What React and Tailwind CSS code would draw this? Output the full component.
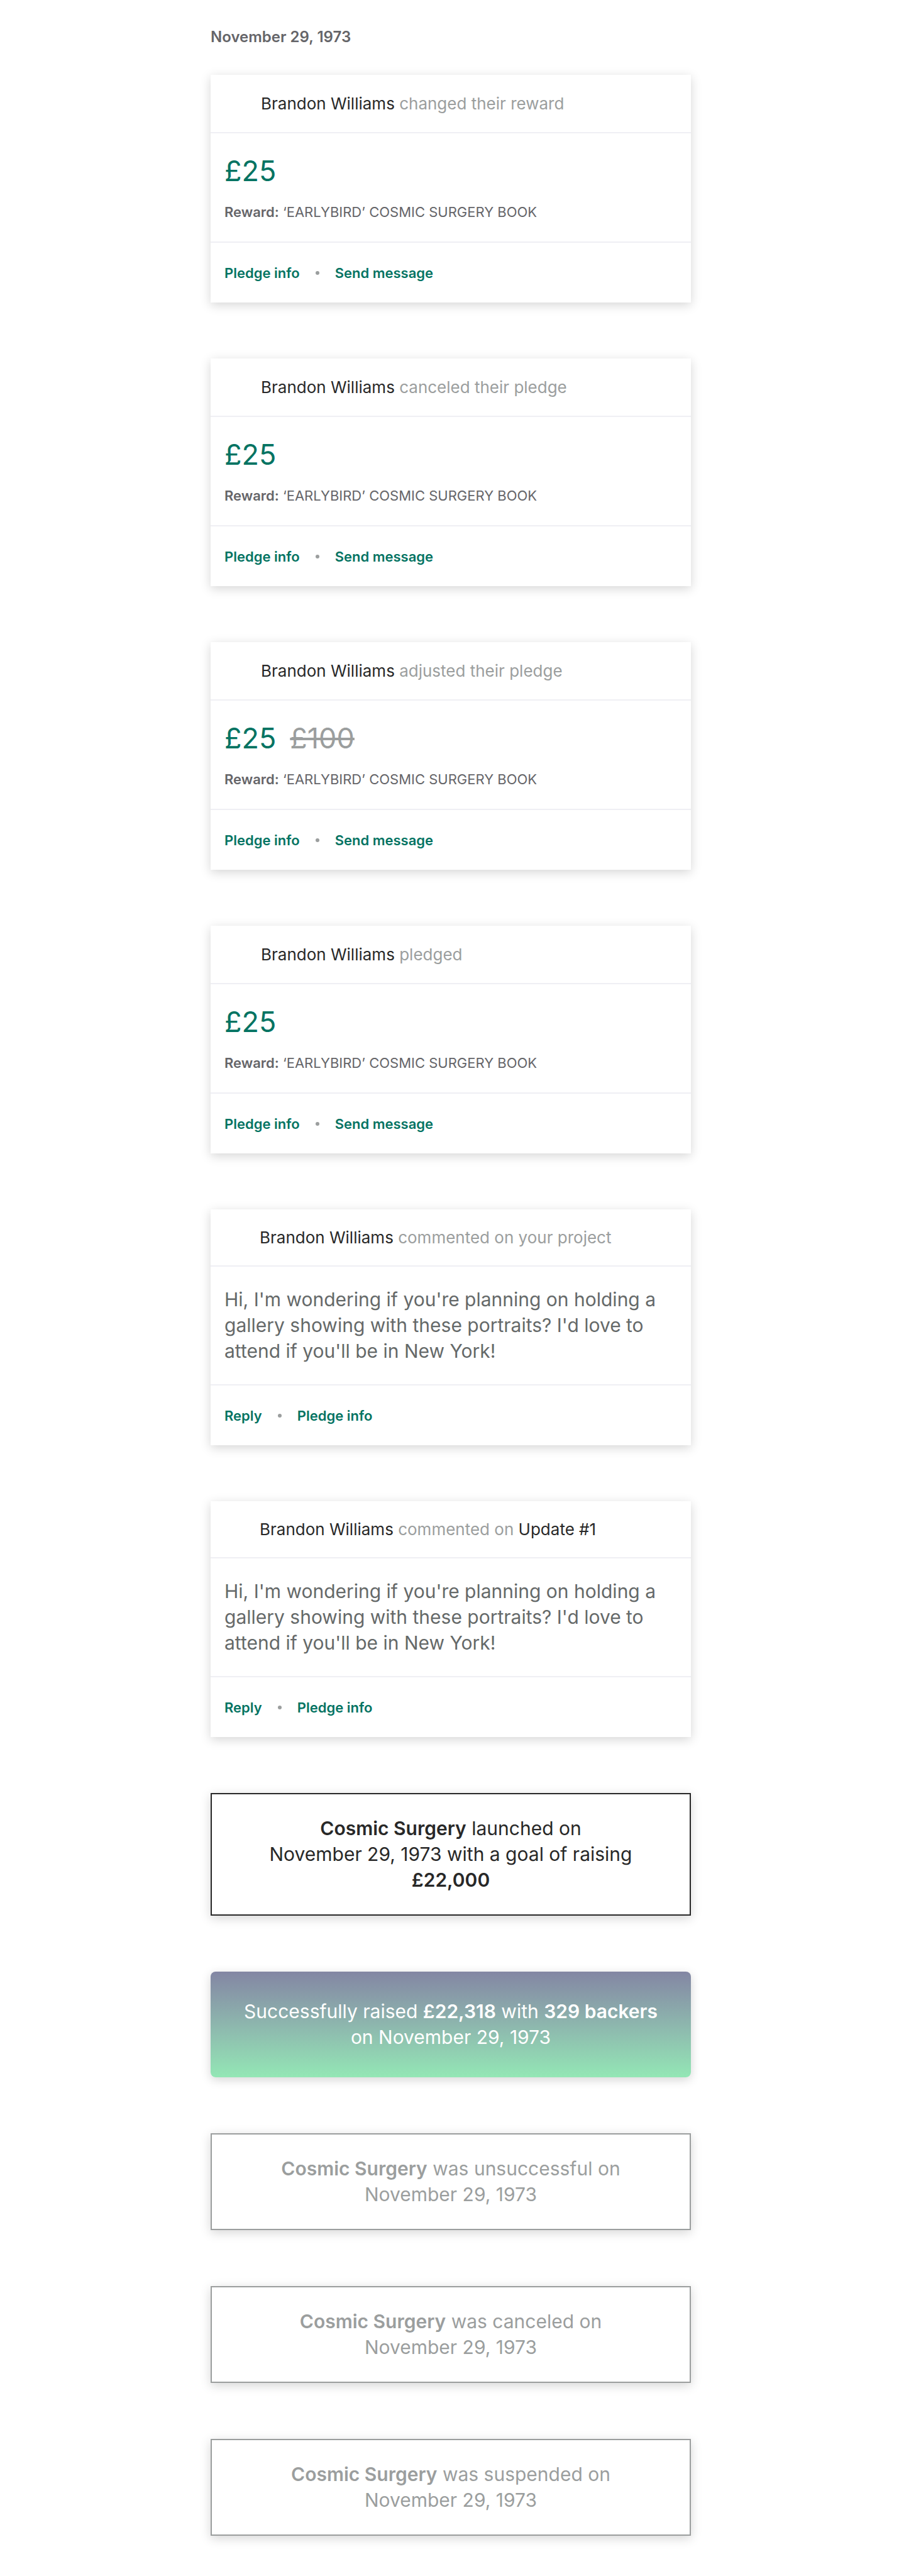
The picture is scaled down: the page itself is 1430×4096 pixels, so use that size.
const DATE = "November 29, 1973";
const REWARD = "‘EARLYBIRD’ COSMIC SURGERY BOOK";
const COMMENT =
  "Hi, I'm wondering if you're planning on holding a gallery showing with these portraits? I'd love to attend if you'll be in New York!";

const SHADOW = "shadow-[0_4px_16px_rgba(0,0,0,0.17)]";

function Actions({ labels }) {
  return (
    <footer className="flex h-[95px] items-center gap-[25px] px-[22px]">
      <button type="button" className="text-[22px] leading-[26px] font-semibold text-[#037362]">
        {labels[0]}
      </button>
      <span aria-hidden="true" className="size-[6px] rounded-full bg-[#9b9e9e]" />
      <button type="button" className="text-[22px] leading-[26px] font-semibold text-[#037362]">
        {labels[1]}
      </button>
    </footer>
  );
}

function PledgeCard({ action, oldAmount }) {
  return (
    <article className={"bg-white " + SHADOW}>
      <header className="flex h-[93px] items-center border-b-2 border-[#efeff4] pr-[22px] pl-[80px]">
        <h2 className="text-[26px] leading-[30px] text-[#9b9e9e]">
          <span className="text-[#282828]">Brandon Williams</span> {action}
        </h2>
      </header>
      <div className="border-b-2 border-[#efeff4] px-[22px] pt-[33px] pb-[34px]">
        <p className="flex gap-[22px] text-[45px] leading-[54px] text-[#037362]">
          £25
          {oldAmount && (
            <s className="text-[#9b9e9e] decoration-4">{oldAmount}</s>
          )}
        </p>
        <p className="mt-[25px] text-[22px] leading-[26px] text-[#656569]">
          <strong className="font-semibold">Reward:</strong> {REWARD}
        </p>
      </div>
      <Actions labels={["Pledge info", "Send message"]} />
    </article>
  );
}

function CommentCard({ children }) {
  return (
    <article className={"bg-white " + SHADOW}>
      <header className="flex h-[91px] items-center border-b-2 border-[#efeff4] pr-[22px] pl-[78px]">
        <h2 className="text-[26px] leading-[30px] text-[#9b9e9e]">
          <span className="text-[#282828]">Brandon Williams</span> {children}
        </h2>
      </header>
      <p className="border-b-2 border-[#efeff4] px-[22px] py-8 text-[30px] leading-[41px] text-[#656969]">
        {COMMENT}
      </p>
      <Actions labels={["Reply", "Pledge info"]} />
    </article>
  );
}

function Notice({ tone, children }) {
  return (
    <article
      className={
        "border-2 px-8 py-[34px] text-center text-[30px] leading-[41px] bg-white " + SHADOW + " " + tone
      }
    >
      <p>{children}</p>
    </article>
  );
}

const LIGHT = "border-[#9b9e9e] text-[#9b9e9e]";
const NoBreakDate = () => <span className="whitespace-nowrap">{DATE}</span>;
const Project = () => <strong className="font-semibold">Cosmic Surgery</strong>;

export default function App() {
  return (
    <main className="mx-auto max-w-[768px] bg-white pt-[45px] pb-16 pl-1 font-['Inter',sans-serif]">
      <h1 className="mb-[46px] text-[24px] leading-[28px] font-semibold text-[#656569]">{DATE}</h1>
      <div className="flex flex-col gap-[89px]">
        <PledgeCard action="changed their reward" />
        <PledgeCard action="canceled their pledge" />
        <PledgeCard action="adjusted their pledge" oldAmount="£100" />
        <PledgeCard action="pledged" />
        <CommentCard>commented on your project</CommentCard>
        <CommentCard>
          commented on <span className="text-[#282828]">Update #1</span>
        </CommentCard>
        <Notice tone="border-[#282828] text-[#282828]">
          <Project /> launched on <NoBreakDate /> with a goal of raising{" "}
          <strong className="font-semibold">£22,000</strong>
        </Notice>
        <article
          className={
            "rounded-lg bg-linear-to-b from-[#8386a3] to-[#93e7b5] px-8 py-[43px] text-center text-[30px] leading-[41px] text-white " +
            SHADOW
          }
        >
          <p>
            Successfully raised <strong className="font-semibold">£22,318</strong> with{" "}
            <strong className="font-semibold">329 backers</strong> on <NoBreakDate />
          </p>
        </article>
        <Notice tone={LIGHT}>
          <Project /> was unsuccessful on <NoBreakDate />
        </Notice>
        <Notice tone={LIGHT}>
          <Project /> was canceled on <NoBreakDate />
        </Notice>
        <Notice tone={LIGHT}>
          <Project /> was suspended on <NoBreakDate />
        </Notice>
      </div>
    </main>
  );
}
